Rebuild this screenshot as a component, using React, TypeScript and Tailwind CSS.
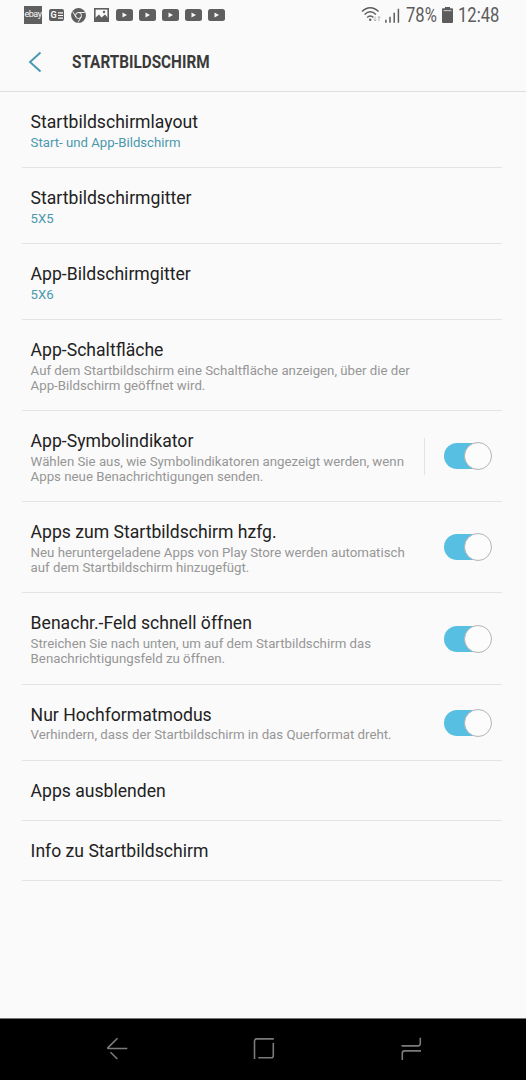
import type { ReactNode } from "react";
import clsx from "clsx";

type Item = {
    title: string,
    value?: string,
    lines?: string[],
    toggle?: boolean,
    divider?: boolean,
    height: string,
};

const items: Item[] = [
    { title: "Startbildschirmlayout", value: "Start- und App-Bildschirm", height: "h-[76px]" },
    { title: "Startbildschirmgitter", value: "5X5", height: "h-[76px]" },
    { title: "App-Bildschirmgitter", value: "5X6", height: "h-[76px]" },
    {
        title: "App-Schaltfläche",
        lines: ["Auf dem Startbildschirm eine Schaltfläche anzeigen, über die der", "App-Bildschirm geöffnet wird."],
        height: "h-[91px]",
    },
    {
        title: "App-Symbolindikator",
        lines: ["Wählen Sie aus, wie Symbolindikatoren angezeigt werden, wenn", "Apps neue Benachrichtigungen senden."],
        toggle: true,
        divider: true,
        height: "h-[91px]",
    },
    {
        title: "Apps zum Startbildschirm hzfg.",
        lines: ["Neu heruntergeladene Apps von Play Store werden automatisch", "auf dem Startbildschirm hinzugefügt."],
        toggle: true,
        height: "h-[91px]",
    },
    {
        title: "Benachr.-Feld schnell öffnen",
        lines: ["Streichen Sie nach unten, um auf dem Startbildschirm das", "Benachrichtigungsfeld zu öffnen."],
        toggle: true,
        height: "h-[92px]",
    },
    {
        title: "Nur Hochformatmodus",
        lines: ["Verhindern, dass der Startbildschirm in das Querformat dreht."],
        toggle: true,
        height: "h-[76px]",
    },
    { title: "Apps ausblenden", height: "h-[60px]" },
    { title: "Info zu Startbildschirm", height: "h-[60px]" },
];

// Squeezes regular Roboto to the width of its condensed cut
function Condensed({ width, className, children }: { width: string, className: string, children: ReactNode }) {
    return (
        <span className={clsx("block whitespace-nowrap", width)}>
            <span className={clsx("inline-block origin-left", className)}>{children}</span>
        </span>
    );
}

function YoutubeIcon() {
    return (
        <svg className="h-3 w-[17px]" viewBox="0 0 17 12">
            <rect width="17" height="12" rx="2.5" fill="#5f5f5f" />
            <path d="M6.5 3.5v5l4.5-2.5z" fill="#fafafa" />
        </svg>
    );
}

function StatusBar() {
    return (
        <div className="flex h-[31px] items-center pb-px pl-6 text-[#5c5c5c]">
            <span className="flex h-[18px] w-[18px] items-center justify-center bg-[#5f5f5f] pb-px text-[9px] leading-none tracking-[-0.5px] text-[#fafafa]">
                ebay
            </span>
            <span className="ml-[7px] flex h-3 w-[15px] items-center justify-center gap-px rounded-[2px] bg-[#5f5f5f] text-[9px] font-bold leading-none text-[#fafafa]">
                G
                <svg className="h-[7px] w-[5px]" viewBox="0 0 5 7" stroke="currentColor" strokeWidth="1.2">
                    <path d="M0 .8h5M0 3.5h5M0 6.2h5" />
                </svg>
            </span>
            <svg className="ml-[7px] h-[15px] w-[15px]" viewBox="0 0 15 15" fill="none">
                <circle cx="7.5" cy="7.5" r="7.4" fill="#5f5f5f" />
                <circle cx="7.5" cy="7.5" r="3" stroke="#fafafa" strokeWidth="1" />
                <path d="M7.5 4.5h6.3M4.9 9L1.8 3.7M10.1 9L7 14.5" stroke="#fafafa" strokeWidth=".9" />
            </svg>
            <svg className="ml-2 h-[14px] w-[15px]" viewBox="0 0 15 14">
                <rect x=".8" y=".8" width="13.4" height="12.4" fill="none" stroke="#5f5f5f" strokeWidth="1.6" />
                <path d="M1 10L5 6.5l2.5 3L11 6.500l3 3.500v3.500H1z" fill="#5f5f5f" />
                <circle cx="10" cy="4" r="1.2" fill="#5f5f5f" />
            </svg>
            <div className="ml-[7px] flex gap-[6px]">
                <YoutubeIcon />
                <YoutubeIcon />
                <YoutubeIcon />
                <YoutubeIcon />
                <YoutubeIcon />
            </div>
            <div className="ml-auto flex items-center pr-[26px]">
                <svg className="h-[18px] w-[40px]" viewBox="0 0 40 18" fill="none" stroke="#5c5c5c">
                    <path d="M1 5.5c5-5 11.500-5 16.500 0M3.600 8.500c3.500-3.400 7.800-3.400 11.300 0M6.200 11.500c2-2 4.200-2 6.200 0" strokeWidth="1.5" />
                    <circle cx="9.2" cy="13.800" r="1.2" fill="#5c5c5c" stroke="none" />
                    <path d="M14 10.500v4.500M12.500 13.500l1.500 1.500 1.500-1.500M18 15v-4.500M16.500 12l1.500-1.500 1.500 1.500" stroke="#b0b0b0" strokeWidth=".9" />
                    <path d="M24.900 13.800V16.800M29 10.800V16.800M33.200 6.800V16.800M37.400 2.700V16.800" strokeWidth="1.5" />
                </svg>
                <Condensed width="ml-[5px] w-[31px] pt-px" className="scale-x-[0.83] text-[20px] leading-6">78%</Condensed>
                <svg className="ml-[5px] h-4 w-[11px]" viewBox="0 0 11 16" fill="#5c5c5c">
                    <path d="M3 0h5v2H3z" />
                    <rect y="1.3" width="11" height="14.7" rx="1" />
                    <path d="M1.5 3h8v1.2h-8z" fill="#bdbdbd" />
                </svg>
                <Condensed width="ml-[5px] w-[42px] pt-px" className="scale-x-[0.83] text-[20px] leading-6">12:48</Condensed>
            </div>
        </div>
    );
}

function Toggle() {
    return (
        <div className="relative h-[26px] w-12 shrink-0">
            <div className="absolute left-0 top-0 h-[26px] w-10 rounded-full bg-[#56bfe2]" />
            <div className="absolute -top-px right-0 h-7 w-7 rounded-full border border-[#b4b4b4] bg-[#fcfcfc]" />
        </div>
    );
}

function SettingRow({ item }: { item: Item }) {
    const detailed = item.value || item.lines;

    return (
        <div className={clsx("flex items-center border-b border-[#e3e3e3] pl-[8.6px] pr-[10px]", item.height)}>
            <div className={clsx("grow whitespace-nowrap", detailed && "self-start pt-[18px]")}>
                <h2 className="text-[17.6px] leading-6 text-[#222]">{item.title}</h2>
                {item.value && <p className="text-[13.2px] leading-[17px] text-[#4a98ad]">{item.value}</p>}
                {item.lines && (
                    <div className={clsx("text-[13.25px] leading-[15.2px] text-[#969696]", item.lines.length > 1 && "pt-px")}>
                        {item.lines.map((line) => (
                            <p key={line}>{line}</p>
                        ))}
                    </div>
                )}
            </div>
            {item.divider && <div className="mr-[19px] h-[37px] w-px shrink-0 bg-[#e3e3e3]" />}
            {item.toggle && <Toggle />}
        </div>
    );
}

function NavBar() {
    return (
        <nav className="flex h-[62px] items-start border-t border-[#777] bg-black pt-[18px]">
            <svg className="ml-[106px] h-6 w-[22px]" viewBox="0 0 22 24" fill="none" stroke="#7b7b7b" strokeWidth="1.6">
                <path d="M11.500 1.200L2 10.600q-.8.9.4.9H21.300M4.500 15.300l6.800 6.700" />
            </svg>
            <svg className="ml-[125px] h-6 w-[22px]" viewBox="0 0 22 24" fill="none" stroke="#7b7b7b" strokeWidth="1.6">
                <path d="M1.500 22V4Q1.500 1.900 3.800 1.900h17M20.300 6v12.500q0 2.300-2 2.300H5.300" />
            </svg>
            <svg className="ml-[125px] h-6 w-[22px]" viewBox="0 0 22 24" fill="none" stroke="#7b7b7b" strokeWidth="1.6">
                <path d="M1.500 8.900H18q2.300 0 2.300-2.300V.7M21 13.900H4.500Q2.300 13.900 2.300 16.200v6.700" />
            </svg>
        </nav>
    );
}

export default function App() {
    return (
        <div className="flex h-[1080px] w-[526px] flex-col overflow-hidden bg-[#fafafa] font-[Roboto,sans-serif]">
            <StatusBar />
            <header className="flex h-[61px] items-center border-b border-[#dedede] pl-7 pt-px">
                <svg className="h-[22px] w-[14px]" viewBox="0 0 14 22" fill="none" stroke="#4698b2" strokeWidth="1.9">
                    <path d="M12.5 1.5L2 11l10.500 9.500" />
                </svg>
                <Condensed width="ml-[30px] w-[140px] pt-[2px]" className="scale-x-[0.85] text-[18px] font-bold leading-6 text-[#3a3a3a]">
                    STARTBILDSCHIRM
                </Condensed>
            </header>
            <main className="grow pl-[22px] pr-6">
                {items.map((item) => (
                    <SettingRow key={item.title} item={item} />
                ))}
            </main>
            <NavBar />
        </div>
    );
}
